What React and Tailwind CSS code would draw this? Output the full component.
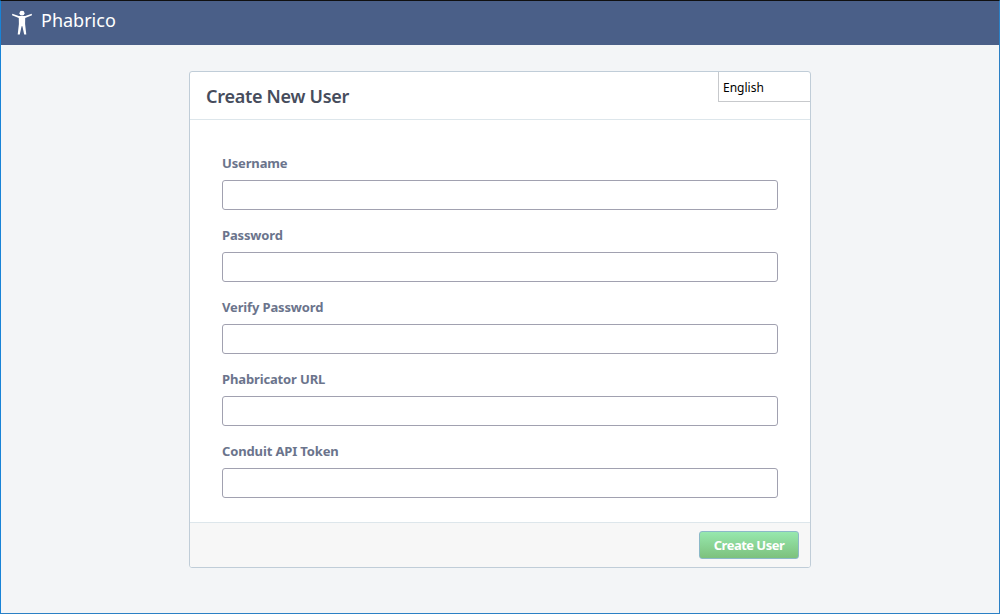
const fields = [
  { label: "Username", type: "text" },
  { label: "Password", type: "password" },
  { label: "Verify Password", type: "password" },
  { label: "Phabricator URL", type: "text" },
  { label: "Conduit API Token", type: "text" },
];

function Logo() {
  return (
    <svg width="20" height="25" viewBox="0 0 20 25" fill="#fff" aria-hidden="true">
      <ellipse cx="10" cy="3.2" rx="2.5" ry="2.4" />
      <path d="M0.3 3.8 L6.8 6 H13.2 L19.7 3.8 L20 5.3 L13.2 8 L13.1 14 L14.3 24.5 H12.2 L10.4 16.2 H9.6 L7.8 24.5 H5.7 L6.9 14 L6.8 8 L0 5.3 Z" />
    </svg>
  );
}

function Field({ label, type }) {
  return (
    <label className="flex h-[72px] flex-col">
      <span className="h-[26px] text-[13px] leading-[18px] font-bold tracking-[-0.14px] text-[#6b748c]">{label}</span>
      <input type={type} className="h-[30px] w-full rounded-[3px] border border-[#a1a1b0] bg-white px-2 outline-none" />
    </label>
  );
}

export default function App() {
  return (
    <div className="flex h-[614px] w-[1000px] flex-col border border-[#2b80c5] border-t-[#101010] border-l-[#1883d7] bg-[#f3f5f7] font-['Noto_Sans',sans-serif]">
      <header className="flex h-11 shrink-0 items-start bg-[#4a5f88] pl-[11px] text-white">
        <div className="pt-[9px]"><Logo /></div>
        <span className="pt-[7px] pl-[9px] text-[18px] leading-6">Phabrico</span>
      </header>
      <main className="mt-[26px] ml-[188px] flex h-[497px] w-[622px] flex-col overflow-hidden rounded-[3px] border border-[#c0cdd8] bg-white">
        <div className="flex h-12 shrink-0 justify-between border-b border-[#dde6eb] pl-4">
          <h1 className="pt-3 text-[18px] leading-6 font-semibold tracking-[-0.28px] text-[#464c5c]">Create New User</h1>
          <div className="h-[30px] w-[92px] border-b border-l border-[#c7c9cc] pt-[7px] pl-1 text-[12px] leading-[18px] text-black">English</div>
        </div>
        <form className="flex grow flex-col px-8 pt-[34px]">
          {fields.map((f) => (
            <Field key={f.label} {...f} />
          ))}
        </form>
        <footer className="flex h-[45px] shrink-0 justify-end border-t border-[#dde6eb] bg-[#f7f7f7] pt-2 pr-[11px]">
          <button className="h-7 w-[100px] rounded-[3px] border border-[#8cb9c8] bg-linear-to-b from-[#97e8ae] to-[#7dc17d] text-[13px] leading-[26px] font-bold tracking-[-0.52px] text-white">Create User</button>
        </footer>
      </main>
    </div>
  );
}
